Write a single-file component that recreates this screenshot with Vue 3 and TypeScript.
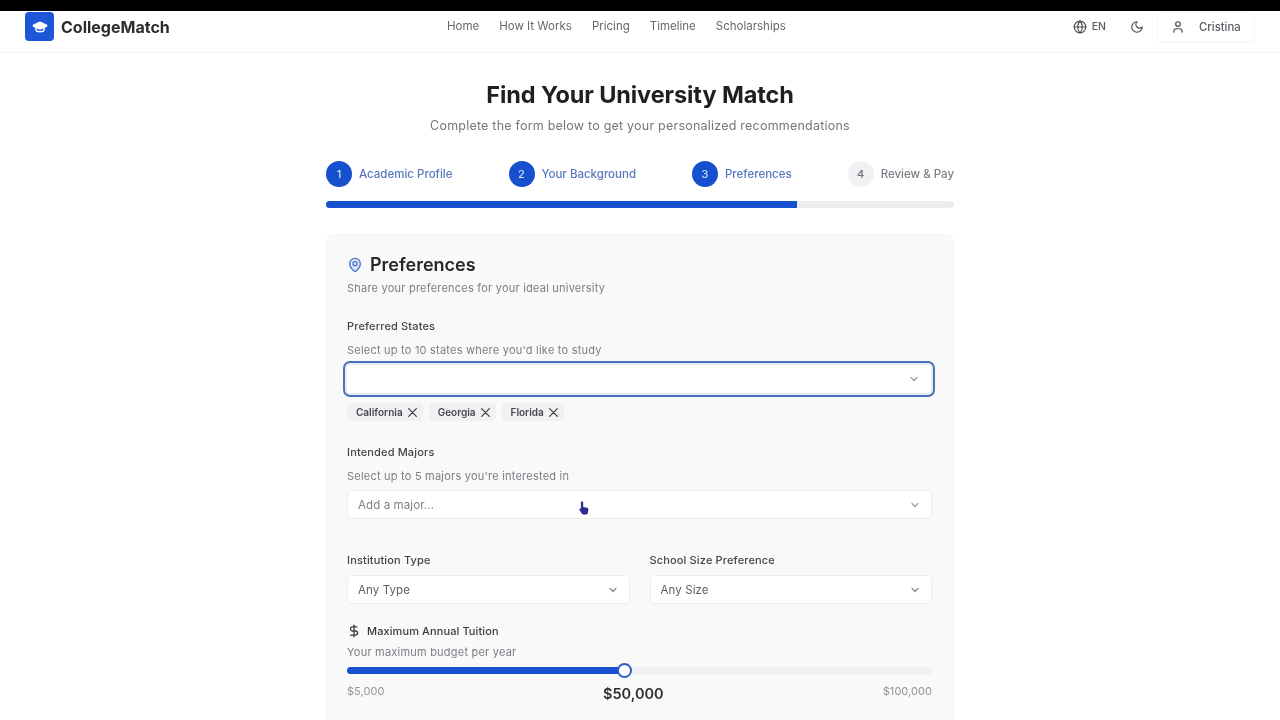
<script setup lang="ts">
const navLinks: string[] = ['Home', 'How It Works', 'Pricing', 'Timeline', 'Scholarships']
const steps = [
  { n: 1, label: 'Academic Profile', on: true },
  { n: 2, label: 'Your Background', on: true },
  { n: 3, label: 'Preferences', on: true },
  { n: 4, label: 'Review & Pay', on: false },
]
const chips: string[] = ['California', 'Georgia', 'Florida']
</script>

<template>
  <div class="page">
    <div class="topbar"></div>
    <header class="header">
      <div class="brand">
        <div class="logo">
          <svg width="16" height="16" viewBox="0 0 24 24" fill="none" stroke="#fff" stroke-width="2.2" stroke-linecap="round" stroke-linejoin="round">
            <path d="M21.4 10.9a1 1 0 0 0 0-1.8L12.8 5.2a2 2 0 0 0-1.7 0L2.600 9.100a1 1 0 0 0 0 1.800l8.500 3.900a2 2 0 0 0 1.700 0z" fill="#fff" />
            <path d="M6 12.500V16c0 1.700 2.700 3 6 3s6-1.300 6-3v-3.500" />
          </svg>
        </div>
        <span class="brand-name">CollegeMatch</span>
      </div>
      <nav class="nav">
        <span v-for="l in navLinks" :key="l">{{ l }}</span>
      </nav>
      <div class="actions">
        <div class="lang">
          <svg width="14" height="14" viewBox="0 0 24 24" fill="none" stroke="#4b4b52" stroke-width="2" stroke-linecap="round" stroke-linejoin="round">
            <circle cx="12" cy="12" r="10" />
            <path d="M12 2a14.500 14.500 0 0 0 0 20 14.500 14.500 0 0 0 0-20" />
            <path d="M2 12h20" />
          </svg>
          <span>EN</span>
        </div>
        <svg class="moon" width="14" height="14" viewBox="0 0 24 24" fill="none" stroke="#4b4b52" stroke-width="2" stroke-linecap="round" stroke-linejoin="round">
          <path d="M12 3a6 6 0 0 0 9 9 9 9 0 1 1-9-9Z" />
        </svg>
        <div class="user">
          <svg width="14" height="14" viewBox="0 0 24 24" fill="none" stroke="#4b4b52" stroke-width="2" stroke-linecap="round" stroke-linejoin="round">
            <path d="M19 21v-2a4 4 0 0 0-4-4H9a4 4 0 0 0-4 4v2" />
            <circle cx="12" cy="7" r="4" />
          </svg>
          <span>Cristina</span>
        </div>
      </div>
    </header>

    <main class="main">
      <h1>Find Your University Match</h1>
      <p class="sub">Complete the form below to get your personalized recommendations</p>

      <div class="stepper">
        <div class="steps">
          <div v-for="s in steps" :key="s.n" class="step" :class="{ on: s.on }">
            <span class="dot">{{ s.n }}</span>
            <span class="step-label">{{ s.label }}</span>
          </div>
        </div>
        <div class="progress"><div class="progress-fill" :style="{ width: '75%' }"></div></div>
      </div>

      <section class="card">
        <div class="card-title">
          <svg width="16" height="16" viewBox="0 0 24 24" fill="#dbe5f7" stroke="#4a74c9" stroke-width="2" stroke-linecap="round" stroke-linejoin="round">
            <path d="M20 10c0 5-5.500 10.200-7.400 11.800a1 1 0 0 1-1.200 0C9.500 20.200 4 15 4 10a8 8 0 0 1 16 0" />
            <circle cx="12" cy="10" r="3" fill="none" />
          </svg>
          <h2>Preferences</h2>
        </div>
        <p class="hint card-hint">Share your preferences for your ideal university</p>

        <label class="label states-label">Preferred States</label>
        <p class="hint states-hint">Select up to 10 states where you'd like to study</p>
        <div class="select focused">
          <span></span>
          <svg class="chev" width="12" height="12" viewBox="0 0 24 24" fill="none" stroke="#9a9da4" stroke-width="2.400" stroke-linecap="round" stroke-linejoin="round"><path d="m6 9 6 6 6-6" /></svg>
        </div>
        <div class="chips">
          <span v-for="c in chips" :key="c" class="chip">
            {{ c }}
            <svg width="9" height="9" viewBox="5 5 14 14" fill="none" stroke="#3a3a40" stroke-width="1.800" stroke-linecap="round" stroke-linejoin="round"><path d="M18 6 6 18M6 6l12 12" /></svg>
          </span>
        </div>

        <label class="label majors-label">Intended Majors</label>
        <p class="hint states-hint">Select up to 5 majors you're interested in</p>
        <div class="select">
          <span class="placeholder">Add a major...</span>
          <svg class="chev" width="12" height="12" viewBox="0 0 24 24" fill="none" stroke="#9a9da4" stroke-width="2.400" stroke-linecap="round" stroke-linejoin="round"><path d="m6 9 6 6 6-6" /></svg>
        </div>

        <div class="two-col">
          <div>
            <label class="label">Institution Type</label>
            <div class="select col-select">
              <span>Any Type</span>
              <svg class="chev" width="12" height="12" viewBox="0 0 24 24" fill="none" stroke="#85888f" stroke-width="2.400" stroke-linecap="round" stroke-linejoin="round"><path d="m6 9 6 6 6-6" /></svg>
            </div>
          </div>
          <div>
            <label class="label">School Size Preference</label>
            <div class="select col-select">
              <span>Any Size</span>
              <svg class="chev" width="12" height="12" viewBox="0 0 24 24" fill="none" stroke="#85888f" stroke-width="2.400" stroke-linecap="round" stroke-linejoin="round"><path d="m6 9 6 6 6-6" /></svg>
            </div>
          </div>
        </div>

        <div class="tuition-label">
          <svg width="14" height="14" viewBox="0 0 24 24" fill="none" stroke="#3a3a40" stroke-width="2.200" stroke-linecap="round" stroke-linejoin="round">
            <path d="M12 2v20" />
            <path d="M17 5H9.500a3.500 3.500 0 0 0 0 7h5a3.500 3.500 0 0 1 0 7H6" />
          </svg>
          <span>Maximum Annual Tuition</span>
        </div>
        <p class="hint budget-hint">Your maximum budget per year</p>
        <div class="slider">
          <div class="slider-fill" :style="{ width: '47.400%' }"></div>
          <div class="thumb"></div>
        </div>
        <div class="range">
          <span class="range-end">$5,000</span>
          <span class="range-val">$50,000</span>
          <span class="range-end">$100,000</span>
        </div>
      </section>
    </main>

    <svg class="cursor" width="12" height="16" viewBox="0 0 12 16">
      <path d="M4 1.500c.8 0 1.200.5 1.200 1.200V7l3.800.8c1 .3 1.500.9 1.400 1.800L9.800 13c-.2 1-.8 1.500-1.800 1.500H5.500c-.8 0-1.300-.4-1.700-1L1.500 10c-.6-1 .4-2 1.300-1.300l.1.100V2.700C2.900 2 3.300 1.500 4 1.500Z" fill="#2e2a8f" />
    </svg>
  </div>
</template>

<style>
html, body { margin: 0; background: #fff; }
</style>

<style scoped>
.page {
  position: relative;
  width: 1280px;
  height: 720px;
  overflow: hidden;
  background: #fff;
  font-family: Inter, "Noto Sans", sans-serif;
  color: #18181b;
  filter: blur(0.35px);
}
.topbar { height: 11px; background: #000; }
.header {
  height: 40px;
  box-sizing: content-box;
  border-bottom: 1px solid #f3f3f5;
  display: flex;
  align-items: flex-start;
  justify-content: space-between;
  padding: 1px 26px 0 25px;
  position: relative;
}
.brand { display: flex; align-items: center; gap: 7px; }
.logo {
  width: 29px;
  height: 29px;
  border-radius: 4px;
  background: #1d56d8;
  display: flex;
  align-items: center;
  justify-content: center;
}
.brand-name { font-size: 16px; font-weight: 700; color: #2b2b30; }
.nav {
  position: absolute;
  left: 447px;
  top: 8px;
  display: flex;
  gap: 20px;
  font-size: 11.500px;
  line-height: 15px;
  color: #66686f;
  white-space: nowrap;
}
.actions { display: flex; align-items: center; height: 29px; }
.lang { display: flex; align-items: center; gap: 5px; margin-right: -1px; font-size: 10.500px; font-weight: 500; color: #5b5b63; }
.moon { margin-left: 25px; }
.user {
  margin-left: 14px;
  width: 96px;
  height: 29px;
  box-sizing: border-box;
  padding-left: 13px;
  display: flex;
  align-items: center;
  gap: 14px;
  border-radius: 4px;
  box-shadow: 0 1px 3px rgba(0, 0, 0, 0.07);
  font-size: 11.300px;
  font-weight: 500;
  color: #5b5b63;
}
.main { width: 628px; margin: 0 auto; }
h1 {
  margin: 27px 0 0;
  text-align: center;
  font-size: 23.500px;
  line-height: 30px;
  font-weight: 700;
  color: #1f1f22;
  letter-spacing: -0.1px;
}
.sub {
  margin: 7px 0 0;
  text-align: center;
  font-size: 12.500px;
  line-height: 18px;
  color: #74767d;
  letter-spacing: 0.22px;
}
.stepper { margin-top: 26px; }
.steps { display: flex; justify-content: space-between; height: 26px; }
.step { display: flex; align-items: center; gap: 7px; font-size: 11.500px; color: #7b7e85; }
.step.on { color: #5677bc; }
.dot {
  width: 26px;
  height: 26px;
  border-radius: 50%;
  background: #f1f1f3;
  color: #6b6e76;
  display: flex;
  align-items: center;
  justify-content: center;
  font-size: 11px;
  font-weight: 500;
}
.step.on .dot { background: #1650cf; color: #cfdcf8; }
.step-label { font-weight: 500; }
.progress { margin-top: 14px; height: 7px; border-radius: 4px; background: #ececef; overflow: hidden; }
.progress-fill { height: 100%; background: #1650cf; }
.card {
  margin-top: 26px;
  background: #f9f9fa;
  border: 1px solid #f4f4f6;
  border-radius: 8px;
  padding: 18px 20px 30px;
  box-sizing: border-box;
  height: 520px;
}
.card-title { display: flex; align-items: center; gap: 7px; height: 24px; }
h2 { margin: 0; font-size: 18px; line-height: 24px; font-weight: 600; color: #26262a; }
.hint { margin: 0; font-size: 11px; line-height: 16px; color: #7b7d84; letter-spacing: 0.22px; }
.card-hint { margin-top: 3px; }
.label { display: block; font-size: 11px; line-height: 16px; font-weight: 500; color: #45454b; letter-spacing: 0.15px; }
.states-label { margin-top: 22px; }
.states-hint { margin-top: 8px; }
.select {
  margin-top: 6px;
  height: 29px;
  box-sizing: border-box;
  background: #fff;
  border: 1px solid #eceded;
  border-radius: 5px;
  display: flex;
  align-items: center;
  justify-content: space-between;
  padding: 0 10px;
  font-size: 11.500px;
  letter-spacing: 0.1px;
  color: #5d5f66;
  width: 585px;
}
.select.focused {
  width: 592px;
  height: 36px;
  margin-top: 3px;
  margin-left: -4px;
  border: 2px solid #4a72b4;
  border-radius: 7px;
  box-shadow: inset 0 0 0 2px #e3ecf8;
  padding: 0 13px;
}
.placeholder { color: #7d7f86; }
.chips { display: flex; gap: 6px; margin-top: 6px; }
.chip {
  display: inline-flex;
  align-items: center;
  gap: 5px;
  height: 18px;
  padding: 0 6px 0 9px;
  background: #f1f1f3;
  border-radius: 4px;
  font-size: 10px;
  font-weight: 600;
  color: #47474d;
}
.majors-label { margin-top: 23px; }
.two-col { display: grid; grid-template-columns: 282.500px 282.500px; gap: 20px; margin-top: 33px; }
.col-select { width: 100%; margin-top: 7px; }
.tuition-label {
  display: flex;
  align-items: center;
  gap: 6px;
  margin-top: 19px;
  height: 16px;
  font-size: 11px;
  font-weight: 500;
  color: #3a3a40;
  letter-spacing: 0.1px;
}
.budget-hint { margin-top: 5px; }
.slider { position: relative; margin-top: 7px; height: 7px; border-radius: 4px; background: #f0f0f2; width: 585px; }
.slider-fill { height: 100%; background: #1650cf; border-radius: 4px 0 0 4px; }
.thumb {
  position: absolute;
  left: 270px;
  top: -4px;
  width: 15px;
  height: 15px;
  box-sizing: border-box;
  border-radius: 50%;
  background: #fff;
  border: 2px solid #2e5fc0;
}
.range { display: flex; justify-content: space-between; align-items: center; width: 585px; margin-top: 7px; position: relative; }
.range-end { font-size: 11px; color: #93959b; line-height: 14px; margin-top: 3px; letter-spacing: 0.05px; }
.range-val {
  position: absolute;
  left: 256px;
  top: 4px;
  font-size: 14.500px;
  font-weight: 600;
  color: #2e2e32;
  line-height: 18px;
}
.cursor { position: absolute; left: 578px; top: 500px; }
</style>
